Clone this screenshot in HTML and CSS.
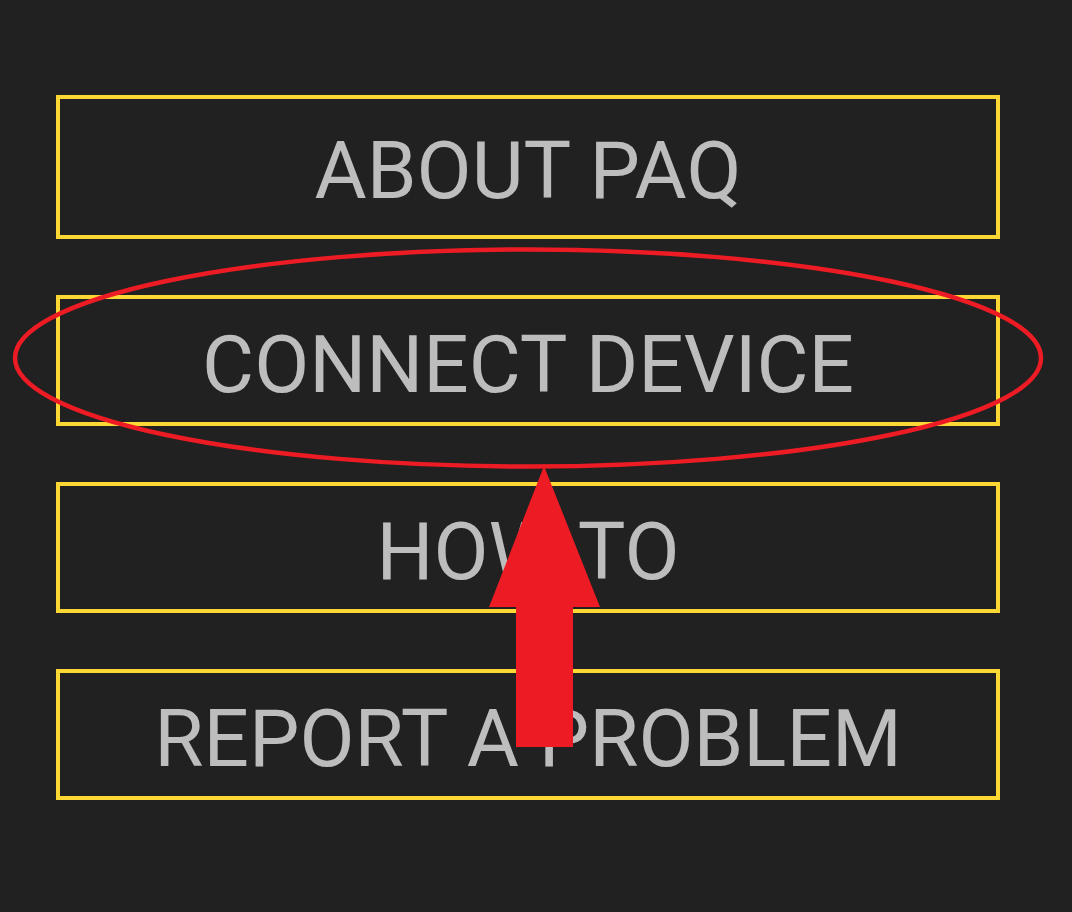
FILE: index.html
```html
<!DOCTYPE html>
<html lang="en">
<head>
<meta charset="utf-8">
<title>Menu</title>
<link rel="stylesheet" href="styles.css">
</head>
<body>
<main class="screen">
  <nav class="menu">
    <button class="menu-btn menu-btn--first">ABOUT PAQ</button>
    <button class="menu-btn">CONNECT DEVICE</button>
    <button class="menu-btn">HOW TO</button>
    <button class="menu-btn">REPORT A PROBLEM</button>
  </nav>
  <svg class="annotation" width="1072" height="912" viewBox="0 0 1072 912" aria-hidden="true">
    <ellipse cx="528" cy="358" rx="513" ry="108.5" fill="none" stroke="#ed1c24" stroke-width="4.5"/>
    <polygon points="544,466 600,607 573,607 573,747 516,747 516,607 489,607" fill="#ed1c24"/>
  </svg>
</main>
</body>
</html>
```
FILE: styles.css
```css
html, body {
  margin: 0;
  padding: 0;
  background: #212121;
}

.screen {
  position: relative;
  width: 1072px;
  height: 912px;
  overflow: hidden;
  background: #212121;
}

.menu {
  display: flex;
  flex-direction: column;
  gap: 56px;
  padding: 95px 0 0 56px;
  width: 944px;
}

.menu-btn {
  display: block;
  width: 944px;
  box-sizing: border-box;
  margin: 0;
  border: 4px solid #fdd835;
  background: transparent;
  color: #bdbdbd;
  font-family: Roboto, "Liberation Sans", sans-serif;
  font-size: 80px;
  font-weight: 400;
  line-height: 94px;
  text-align: center;
  padding: 19px 0 10px;
  height: 131px;
  white-space: nowrap;
}

.menu-btn--first {
  height: 144px;
  padding: 25px 0 17px;
}

.annotation {
  position: absolute;
  left: 0;
  top: 0;
  pointer-events: none;
}
```
